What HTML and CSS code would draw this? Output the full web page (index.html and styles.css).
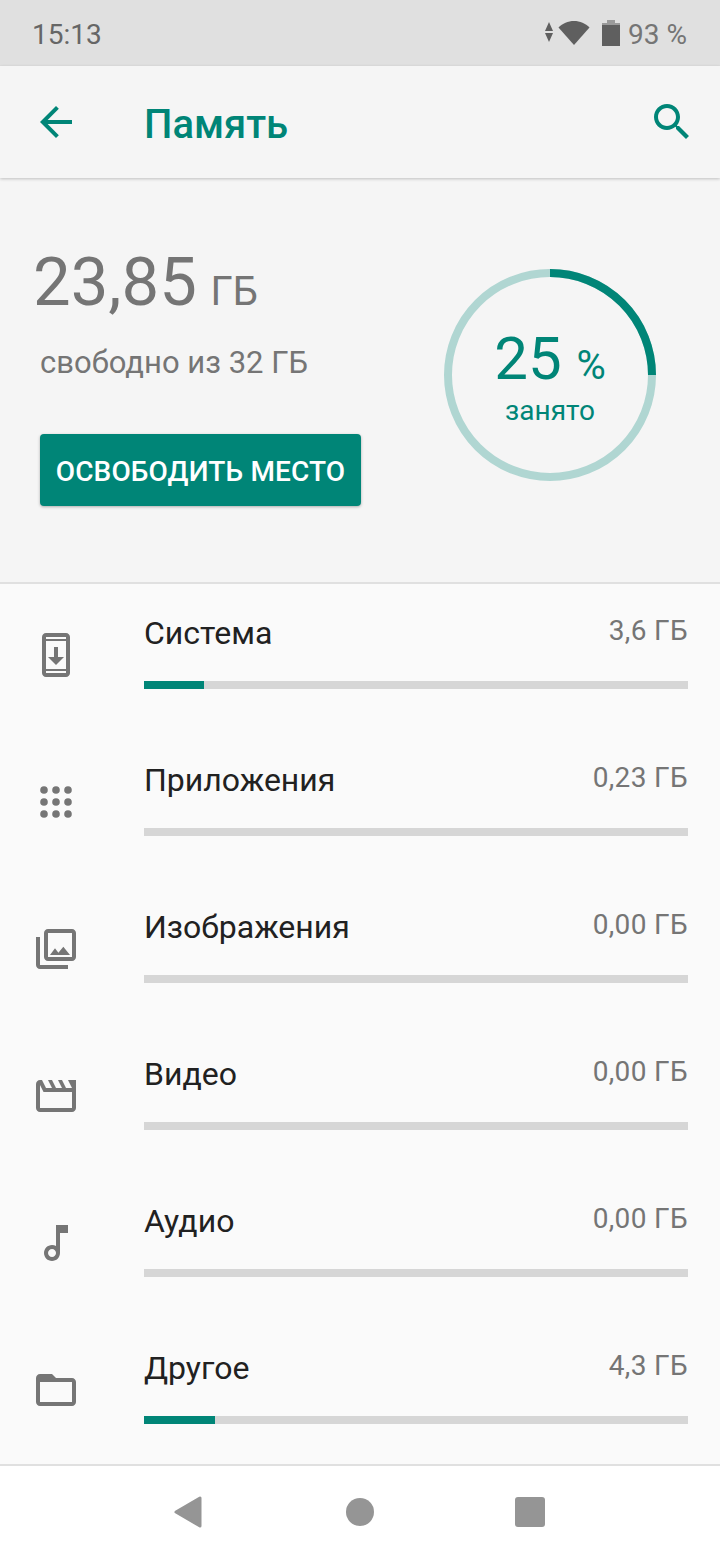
FILE: index.html
```html
<!DOCTYPE html>
<html lang="ru">
<head>
  <meta charset="UTF-8">
  <meta name="viewport" content="width=device-width, initial-scale=1.0">
  <title>Память</title>
  <link rel="stylesheet" href="styles.css">
</head>
<body>
  <div class="status-bar">
    <span class="status-time">15:13</span>
    <div class="status-icons">
      <svg class="status-arrows" width="10" height="22" viewBox="0 0 10 22"><path d="M5 1l4 9H1zM5 21l4-9H1z"/></svg>
      <svg class="status-wifi" width="32" height="26" viewBox="0 0 32 26"><path d="M16 25L.5 7.5C4.5 3.5 10 1 16 1s11.500 2.500 15.500 6.500z"/></svg>
      <svg class="status-battery" width="18" height="26" viewBox="0 0 18 26"><path fill="#9a9a9a" d="M5 0h8v3h5v4H0V3h5z"/><path d="M0 5h18v21H0z"/></svg>
      <span class="status-level">93 %</span>
    </div>
  </div>

  <header class="app-bar">
    <svg class="icon-teal" width="48" height="48" viewBox="0 0 24 24"><path d="M20 11H7.830l5.590-5.590L12 4l-8 8 8 8 1.410-1.410L7.830 13H20v-2z"/></svg>
    <h1 class="app-title">Память</h1>
    <svg class="icon-teal" width="48" height="48" viewBox="0 0 24 24"><path d="M15.500 14h-.79l-.28-.27C15.410 12.590 16 11.110 16 9.500 16 5.910 13.090 3 9.500 3S3 5.910 3 9.500 5.910 16 9.500 16c1.610 0 3.090-.59 4.230-1.570l.27.28v.79l5 4.990L20.490 19l-4.990-5zm-6 0C7.010 14 5 11.990 5 9.500S7.010 5 9.500 5 14 7.010 14 9.500 11.990 14 9.500 14z"/></svg>
  </header>

  <section class="summary">
    <div class="summary-left">
      <div class="free-amount">23,85 <span class="free-unit">ГБ</span></div>
      <div class="free-label">свободно из 32 ГБ</div>
      <button class="free-button">ОСВОБОДИТЬ МЕСТО</button>
    </div>
    <div class="gauge">
      <svg width="212" height="212" viewBox="0 0 212 212">
        <circle class="gauge-track" cx="106" cy="106" r="102"/>
        <path class="gauge-fill" d="M106 4A102 102 0 0 1 208 106"/>
      </svg>
      <div class="gauge-text">
        <div class="gauge-value">25 <span class="gauge-percent">%</span></div>
        <div class="gauge-label">занято</div>
      </div>
    </div>
  </section>

  <main class="storage-list">
    <div class="storage-row">
      <svg class="row-icon" width="48" height="48" viewBox="0 0 24 24"><path d="M17 1.010L7 1c-1.100 0-2 .9-2 2v18c0 1.100.9 2 2 2h10c1.100 0 2-.9 2-2V3c0-1.100-.9-1.990-2-1.990zM17 21H7v-1h10v1zm0-2H7V5h10v14zM7 4V3h10v1H7zm9 9h-3V8h-2v5H8l4 4 4-4z"/></svg>
      <div class="row-body">
        <div class="row-head"><span class="row-name">Система</span><span class="row-size">3,6 ГБ</span></div>
        <div class="bar"><div class="bar-fill" style="width: 60px"></div></div>
      </div>
    </div>
    <div class="storage-row">
      <svg class="row-icon" width="48" height="48" viewBox="0 0 24 24">
        <circle cx="6" cy="6" r="1.900"/><circle cx="12" cy="6" r="1.900"/><circle cx="18" cy="6" r="1.900"/>
        <circle cx="6" cy="12" r="1.900"/><circle cx="12" cy="12" r="1.900"/><circle cx="18" cy="12" r="1.900"/>
        <circle cx="6" cy="18" r="1.900"/><circle cx="12" cy="18" r="1.900"/><circle cx="18" cy="18" r="1.900"/>
      </svg>
      <div class="row-body">
        <div class="row-head"><span class="row-name">Приложения</span><span class="row-size">0,23 ГБ</span></div>
        <div class="bar"></div>
      </div>
    </div>
    <div class="storage-row">
      <svg class="row-icon" width="48" height="48" viewBox="0 0 24 24"><path d="M20 4v12H8V4h12m0-2H8c-1.100 0-2 .9-2 2v12c0 1.100.9 2 2 2h12c1.100 0 2-.9 2-2V4c0-1.100-.9-2-2-2zm-8.500 9.670l1.690 2.260 2.480-3.100L19 15H9zM2 6v14c0 1.100.9 2 2 2h14v-2H4V6H2z"/></svg>
      <div class="row-body">
        <div class="row-head"><span class="row-name">Изображения</span><span class="row-size">0,00 ГБ</span></div>
        <div class="bar"></div>
      </div>
    </div>
    <div class="storage-row">
      <svg class="row-icon" width="48" height="48" viewBox="0 0 24 24"><path d="M4 6.470L5.760 10H20v8H4V6.470M22 4h-4l2 4h-3l-2-4h-2l2 4h-3L10 4H8l2 4H7L5 4H4c-1.100 0-1.990.9-1.990 2L2 18c0 1.100.9 2 2 2h16c1.100 0 2-.9 2-2V4z"/></svg>
      <div class="row-body">
        <div class="row-head"><span class="row-name">Видео</span><span class="row-size">0,00 ГБ</span></div>
        <div class="bar"></div>
      </div>
    </div>
    <div class="storage-row">
      <svg class="row-icon" width="48" height="48" viewBox="0 0 24 24"><path d="M12 3l.01 10.550c-.59-.34-1.270-.55-2-.55C7.790 13 6 14.790 6 17s1.790 4 4.010 4S14 19.210 14 17V7h4V3h-6zm-1.990 16c-1.100 0-2-.9-2-2s.9-2 2-2 2 .9 2 2-.9 2-2 2z"/></svg>
      <div class="row-body">
        <div class="row-head"><span class="row-name">Аудио</span><span class="row-size">0,00 ГБ</span></div>
        <div class="bar"></div>
      </div>
    </div>
    <div class="storage-row">
      <svg class="row-icon" width="48" height="48" viewBox="0 0 24 24"><path d="M20 6h-8l-2-2H4c-1.100 0-1.990.9-1.990 2L2 18c0 1.100.9 2 2 2h16c1.100 0 2-.9 2-2V8c0-1.100-.9-2-2-2zm0 12H4V8h16v10z"/></svg>
      <div class="row-body">
        <div class="row-head"><span class="row-name">Другое</span><span class="row-size">4,3 ГБ</span></div>
        <div class="bar"><div class="bar-fill" style="width: 71px"></div></div>
      </div>
    </div>
  </main>

  <nav class="nav-bar">
    <svg width="30" height="34" viewBox="0 0 30 34"><path d="M27 3v28L3 17z" stroke="#959595" stroke-width="3" stroke-linejoin="round"/></svg>
    <div class="nav-home"></div>
    <div class="nav-recent"></div>
  </nav>
</body>
</html>
```
FILE: styles.css
```css
body {
  margin: 0;
  width: 720px;
  height: 1560px;
  overflow: hidden;
  background-color: #fafafa;
  font-family: Roboto, "Noto Sans", sans-serif;
}

/* status bar */
.status-bar {
  display: flex;
  justify-content: space-between;
  align-items: center;
  height: 66px;
  padding: 0 33px 0 32px;
  background-color: #e0e0e0;
  color: #666666;
  font-size: 28px;
}

.status-time {
  margin-top: 2px;
}

.status-icons {
  display: flex;
  align-items: center;
}

.status-icons svg {
  fill: #5f5f5f;
}

.status-arrows {
  margin-bottom: 3px;
}

.status-wifi {
  margin-left: 4px;
}

.status-battery {
  margin-left: 12px;
}

.status-level {
  margin: 2px 0 0 8px;
  color: #757575;
}

/* app bar */
.app-bar {
  position: relative;
  display: flex;
  align-items: center;
  height: 112px;
  padding: 0 24px 0 32px;
  background-color: #f5f5f5;
  box-shadow: 0 1px 3px rgba(0, 0, 0, 0.22);
}

.icon-teal {
  fill: #008577;
}

.app-title {
  flex: 1;
  margin: 4px 0 0 64px;
  color: #008577;
  font-size: 40px;
  font-weight: 500;
}

/* summary */
.summary {
  display: flex;
  justify-content: space-between;
  height: 406px;
  padding: 0 64px 0 33px;
  box-sizing: border-box;
  background-color: #f5f5f5;
  border-bottom: 2px solid #e0e0e0;
}

.summary-left {
  padding-top: 64px;
}

.free-amount {
  color: #757575;
  font-size: 67px;
  line-height: 80px;
}

.free-unit {
  margin-left: -3px;
  font-size: 40px;
  line-height: 1;
}

.free-label {
  margin: 21px 0 0 7px;
  color: #757575;
  font-size: 31px;
  line-height: 40px;
}

.free-button {
  display: block;
  width: 321px;
  height: 72px;
  margin: 51px 0 0 7px;
  padding: 2px 0 0;
  border: none;
  border-radius: 4px;
  background-color: #008577;
  box-shadow: 0 1px 3px rgba(0, 0, 0, 0.3);
  color: #ffffff;
  font-family: inherit;
  font-size: 28px;
  font-weight: 500;
  letter-spacing: 0.15px;
}

.gauge {
  display: grid;
  align-self: flex-start;
  width: 212px;
  height: 212px;
  margin-top: 91px;
}

.gauge > * {
  grid-area: 1 / 1;
}

.gauge-track,
.gauge-fill {
  fill: none;
  stroke-width: 8;
}

.gauge-track {
  stroke: #b0d6d2;
}

.gauge-fill {
  stroke: #008577;
}

.gauge-text {
  padding-top: 55px;
  color: #008577;
  text-align: center;
}

.gauge-value {
  font-size: 60px;
  line-height: 70px;
}

.gauge-percent {
  font-size: 40px;
  line-height: 1;
}

.gauge-label {
  font-size: 28px;
  line-height: 34px;
}

/* storage rows */
.storage-row {
  display: flex;
  height: 147px;
  padding: 0 32px;
  box-sizing: border-box;
}

.storage-row:last-child {
  height: 145px;
}

.row-icon {
  flex: none;
  margin-top: 47px;
  fill: #757575;
}

.row-body {
  flex: 1;
  margin-left: 64px;
  padding-top: 29px;
}

.row-head {
  display: flex;
  justify-content: space-between;
  height: 40px;
  margin-bottom: 28px;
}

.row-name {
  color: #212121;
  font-size: 32px;
  line-height: 40px;
}

.row-size {
  color: #757575;
  font-size: 28px;
  letter-spacing: 0.35px;
  line-height: 36px;
}

.bar {
  height: 8px;
  background-color: #d6d6d6;
}

.bar-fill {
  height: 100%;
  background-color: #008577;
}

/* nav bar */
.nav-bar {
  display: flex;
  align-items: center;
  justify-content: space-between;
  height: 96px;
  padding: 0 175px 2px 173px;
  box-sizing: border-box;
  background-color: #ffffff;
  border-top: 2px solid #e0e0e0;
  fill: #959595;
}

.nav-home {
  width: 28px;
  height: 28px;
  margin-left: 2px;
  border-radius: 50%;
  background-color: #959595;
}

.nav-recent {
  width: 30px;
  height: 30px;
  border-radius: 3px;
  background-color: #959595;
}
```
